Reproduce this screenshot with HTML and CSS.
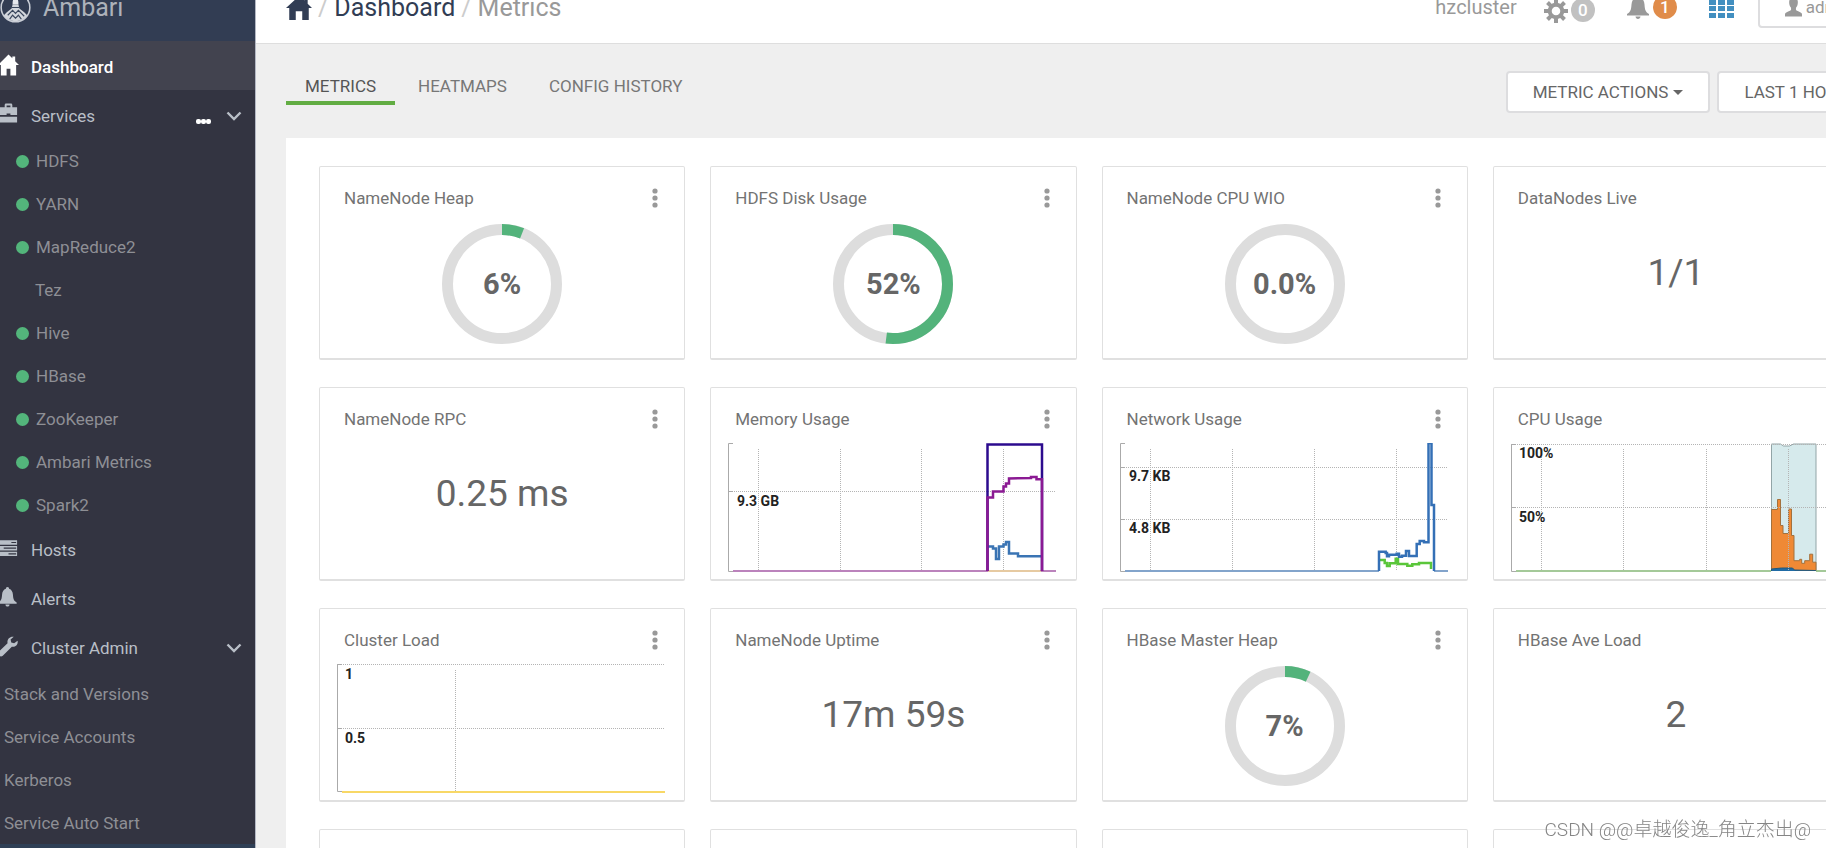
FILE: index.html
```html
<!DOCTYPE html>
<html lang="en">
<head>
<meta charset="utf-8">
<title>Ambari - Dashboard Metrics</title>
<link rel="stylesheet" href="styles.css">
</head>
<body>
<svg class="defs" aria-hidden="true">
  <symbol id="home" viewBox="0 0 24 22"><path d="M12 0 0 11h3v11h6v-8h6v8h6V11h3l-4-4V1h-3v3z"/></symbol>
  <symbol id="bell" viewBox="0 0 22 24"><path d="M11 0c1.300 0 1.900.9 1.900 2 3 1 4.300 3.500 4.600 7 .4 5.500 1 7.500 4.500 9.500v1.500H0v-1.500C3.500 16.500 4.100 14.500 4.500 9c.3-3.500 1.600-6 4.600-7 0-1.100.6-2 1.900-2zM8.500 21h5c-.2 1.600-1.100 2.500-2.500 2.500S8.700 22.600 8.500 21z"/></symbol>
  <symbol id="dots" viewBox="0 0 6 20"><circle cx="3" cy="3" r="2.600"/><circle cx="3" cy="10" r="2.600"/><circle cx="3" cy="17" r="2.600"/></symbol>
  <symbol id="chevron" viewBox="0 0 16 10"><path d="M1.500 1.500 8 8l6.500-6.500" fill="none" stroke="currentColor" stroke-width="2.400"/></symbol>
</svg>
<div class="app">
  <nav class="sidebar" aria-label="Main">
    <a class="brand" href="#">
      <svg class="logo" viewBox="0 0 32 32" aria-hidden="true"><circle cx="16" cy="16" r="14.800" fill="none" stroke="#c9ced6" stroke-width="1.600"/><path d="M15.200 2h1.600v5h-1.600zM13 11c0-3 1.200-4.500 3-4.500S19 8 19 11v2h-6z" fill="#e6e9ee"/><path d="M13 13h6l1 4 5 4 3 3c-3 4.500-7.500 6-12 6S7 28.500 4 24l3-3 5-4z" fill="#d3d7dd"/><path d="M8 24l5-5 3 3 3-3 6 6M10 28l3-4 3 3 3-3 3 4M12 16h8" fill="none" stroke="#3b485e" stroke-width="1.200"/></svg>
      <span>Ambari</span>
    </a>
    <ul class="menu">
      <li><a class="item active" href="#"><svg class="icon" viewBox="0 0 22 22"><path d="M11 0 0 11h3v11h6v-7h4v7h6V11h3l-4-4V2h-3v2z"/></svg><span>Dashboard</span></a></li>
      <li>
        <div class="item"><a class="item-link" href="#"><svg class="icon" viewBox="0 0 22 22"><path d="M7 4V1.500C7 .7 7.500 0 8.500 0h5c1 0 1.500.7 1.500 1.500V4h5v8h-7v-1.500H9V12H0V4zm2 0h4V2H9zM0 14h20v6H0z"/></svg><span>Services</span></a>
        <button class="more" type="button" aria-label="Service actions"><i></i><i></i><i></i></button>
        <button class="toggle" type="button" aria-label="Toggle services"><svg><use href="#chevron"/></svg></button></div>
        <ul class="services">
          <li><a href="#"><i class="dot"></i>HDFS</a></li>
          <li><a href="#"><i class="dot"></i>YARN</a></li>
          <li><a href="#"><i class="dot"></i>MapReduce2</a></li>
          <li><a class="client" href="#">Tez</a></li>
          <li><a href="#"><i class="dot"></i>Hive</a></li>
          <li><a href="#"><i class="dot"></i>HBase</a></li>
          <li><a href="#"><i class="dot"></i>ZooKeeper</a></li>
          <li><a href="#"><i class="dot"></i>Ambari Metrics</a></li>
          <li><a href="#"><i class="dot"></i>Spark2</a></li>
        </ul>
      </li>
      <li><a class="item" href="#"><svg class="icon" viewBox="0 0 22 22"><path d="M0 3h20v4.500H0zM0 9h20v4.500H0zM0 15h20v4.500H0z"/><path d="M14 5.200h5M6 11.200h13M11 17.200h8" stroke="#333441" stroke-width="1.200"/></svg><span>Hosts</span></a></li>
      <li><a class="item" href="#"><svg class="icon bell"><use href="#bell"/></svg><span>Alerts</span></a></li>
      <li>
        <div class="item"><a class="item-link" href="#"><svg class="icon" viewBox="0 0 22 22"><path d="M20.500 5.500c.8 3.500-2 7-6 6.300L5 21.200c-1.400 1.200-4 .8-4.800-1-.5-1.200-.2-2.500.7-3.300L10 8c-.8-4 2.500-7.500 6.500-6.700l-3.300 3 .7 3 3 .7z"/></svg><span>Cluster Admin</span></a>
        <button class="toggle" type="button" aria-label="Toggle cluster admin"><svg><use href="#chevron"/></svg></button></div>
        <ul class="admin">
          <li><a href="#">Stack and Versions</a></li>
          <li><a href="#">Service Accounts</a></li>
          <li><a href="#">Kerberos</a></li>
          <li><a href="#">Service Auto Start</a></li>
        </ul>
      </li>
    </ul>
    <div class="sidebar-foot"></div>
  </nav>

  <div class="page">
    <header class="topbar">
      <nav class="crumbs" aria-label="Breadcrumb">
        <a href="#" aria-label="Home"><svg class="crumb-home"><use href="#home"/></svg></a><span class="slash">/</span><a href="#">Dashboard</a><span class="slash">/</span><span class="current">Metrics</span>
      </nav>
      <div class="tools">
        <a class="cluster" href="#">hzcluster</a>
        <button class="tool" type="button" aria-label="Background operations"><svg class="gear" viewBox="0 0 24 24"><g fill="none" stroke="currentColor"><circle cx="12" cy="12" r="6.300" stroke-width="4"/><path stroke-width="4" d="M12 0v5M12 19v5M0 12h5M19 12h5M3.500 3.500l3.600 3.600M16.900 16.900l3.600 3.600M20.500 3.500l-3.600 3.600M7.100 16.900l-3.600 3.600"/></g></svg><span class="badge low">0</span></button>
        <button class="tool" type="button" aria-label="Alerts"><svg class="tool-bell"><use href="#bell"/></svg><span class="badge">1</span></button>
        <button class="tool" type="button" aria-label="Views"><svg class="views" viewBox="0 0 25 25"><path d="M0 0h7v5H0zM9 0h7v5H9zM18 0h7v5h-7zM0 7h7v5H0zM9 7h7v5H9zM18 7h7v5h-7zM0 13h7v5H0zM9 13h7v5H9zM18 13h7v5h-7zM0 20h7v5H0zM9 20h7v5H9zM18 20h7v5h-7z"/></svg></button>
        <button class="btn user" type="button"><svg class="person" viewBox="0 0 18 20"><path d="M9 0c3 0 4.600 2 4.600 5 0 2.500-.8 4.500-2 5.800v2c.5 1.500 5.400 2 6.200 4.200.3.800.2 2 .2 3H0c0-1-.1-2.200.2-3 .8-2.200 5.700-2.700 6.200-4.200v-2c-1.200-1.300-2-3.300-2-5.800C4.400 2 6 0 9 0z"/></svg>admin</button>
      </div>
    </header>

    <main>
      <div class="bar">
        <div class="tabs" role="tablist">
          <a class="tab selected" role="tab" href="#">METRICS</a>
          <a class="tab" role="tab" href="#">HEATMAPS</a>
          <a class="tab" role="tab" href="#">CONFIG HISTORY</a>
        </div>
        <div class="actions">
          <button class="btn" type="button">METRIC ACTIONS <i class="caret"></i></button>
          <button class="btn" type="button">LAST 1 HOUR <i class="caret"></i></button>
        </div>
      </div>

      <section class="panel">
        <article class="card"><h2>NameNode Heap</h2><button class="menu-btn" type="button" aria-label="Widget menu"><svg><use href="#dots"/></svg></button>
          <div class="donut"><svg viewBox="0 0 120 120"><circle class="track" cx="60" cy="60" r="54.500"/><circle class="fill" cx="60" cy="60" r="54.500" pathLength="100" stroke-dasharray="6 94"/></svg><span>6%</span></div></article>
        <article class="card"><h2>HDFS Disk Usage</h2><button class="menu-btn" type="button" aria-label="Widget menu"><svg><use href="#dots"/></svg></button>
          <div class="donut"><svg viewBox="0 0 120 120"><circle class="track" cx="60" cy="60" r="54.500"/><circle class="fill" cx="60" cy="60" r="54.500" pathLength="100" stroke-dasharray="52 48"/></svg><span>52%</span></div></article>
        <article class="card"><h2>NameNode CPU WIO</h2><button class="menu-btn" type="button" aria-label="Widget menu"><svg><use href="#dots"/></svg></button>
          <div class="donut"><svg viewBox="0 0 120 120"><circle class="track" cx="60" cy="60" r="54.500"/></svg><span>0.0%</span></div></article>
        <article class="card"><h2>DataNodes Live</h2><p class="value">1/1</p></article>

        <article class="card"><h2>NameNode RPC</h2><button class="menu-btn" type="button" aria-label="Widget menu"><svg><use href="#dots"/></svg></button><p class="value">0.25 ms</p></article>
        <article class="card"><h2>Memory Usage</h2><button class="menu-btn" type="button" aria-label="Widget menu"><svg><use href="#dots"/></svg></button>
          <svg class="chart" viewBox="0 0 330 130">
            <path class="grid" d="M30.500 6v122M112.500 6v122M193.500 6v122M275.500 6v122M0 48.500h328"/>
            <path class="axis" d="M5 .5H.5v128H5M0 48.500h5"/>
            <path d="M5 128H328" stroke="#a45aa6" stroke-width="1.500" fill="none"/><path d="M260 128h53" stroke="#f5e29a" stroke-width="1.500" fill="none"/>
            <path d="M259.500 103.500h5.500v2h3V116h3v-12.500h4.500v-2h2.500V99h3v11.500h9v2.800h23" fill="none" stroke="#3a74b4" stroke-width="2.500"/>
            <path d="M259.500 128V1.500h54.500V128" fill="none" stroke="#2c0b8e" stroke-width="2.500"/>
            <path d="M259.500 128V54.500h5.500v-6h10.500v-5h2.500v-3h3v-5l22-.5v-1h5.500v2.300h5.500V128" fill="none" stroke="#8b1a93" stroke-width="2.500"/>
            <text x="9" y="63">9.3 GB</text>
          </svg></article>
        <article class="card"><h2>Network Usage</h2><button class="menu-btn" type="button" aria-label="Widget menu"><svg><use href="#dots"/></svg></button>
          <svg class="chart" viewBox="0 0 330 130">
            <path class="grid" d="M30.500 6v122M112.500 6v122M194.500 6v122M276.500 6v122M0 24.500h328M0 76.500h328"/>
            <path class="axis" d="M5 .5H.5v128H5M0 24.500h5M0 76.500h5"/>
            <path d="M5 128h254M314 128h14" stroke="#5b87ba" stroke-width="1.500" fill="none"/>
            <path d="M259.500 117h5.200v3h2.300v3h2.700v-2.700h6v-4.600h2.300v5.300h9.300v1.700h5v-1.400h6.700V120H311v6" fill="none" stroke="#5ac63a" stroke-width="2.500"/>
            <path d="M259 128v-19.300h6.700v1.300h1.300v3.300h2v-1.600h7.700v-1H279v3h3v-1h4V108h3v5h7.700v-12h3v-3h4.300v1.300h4.500V0h3v62h2.500v66" fill="none" stroke="#3470b6" stroke-width="2.500"/>
            <text x="9" y="38">9.7 KB</text><text x="9" y="90">4.8 KB</text>
          </svg></article>
        <article class="card"><h2>CPU Usage</h2>
          <svg class="chart" viewBox="0 0 330 130">
            <path d="M260.500 128V1h9l3 2h6l4-2h22.500v127" fill="#d6eaec" stroke="#92a5a7"/>
            <path d="M260.500 128V66.500h6v-10h3v26h2.500v8h5.500V66h3v26.500h2.500v25.200h5.700v-1.400h2v4h3v-2.600h5v-6.500h3v8h3.300V128" fill="#ef8935" stroke="#a3713d"/>
            <path d="M260.500 128v-2l10-1h11l2 2 21 .5v.5" fill="#1f6ba5" stroke="#245777"/>
            <path class="grid" d="M30.500 6v122M112.500 6v122M195.500 6v122M277.500 6v122M0 1.500h328M0 64.500h328"/>
            <path class="axis" d="M5 1.500H.5v127H5M0 64.500h5"/>
            <path d="M5 128h255M305 128h23" stroke="#86b878" stroke-width="1.500" fill="none"/>
            <text x="8" y="15">100%</text><text x="8" y="79">50%</text>
          </svg></article>

        <article class="card"><h2>Cluster Load</h2><button class="menu-btn" type="button" aria-label="Widget menu"><svg><use href="#dots"/></svg></button>
          <svg class="chart" viewBox="0 0 330 130">
            <path class="grid" d="M118.500 6v122M0 .5h328M0 64.500h328"/>
            <path class="axis" d="M5 .5H.5v127H5M0 64.500h5"/>
            <path d="M5 128h323" stroke="#f8d866" stroke-width="2" fill="none"/>
            <text x="8" y="15">1</text><text x="8" y="79">0.5</text>
          </svg></article>
        <article class="card"><h2>NameNode Uptime</h2><button class="menu-btn" type="button" aria-label="Widget menu"><svg><use href="#dots"/></svg></button><p class="value">17m 59s</p></article>
        <article class="card"><h2>HBase Master Heap</h2><button class="menu-btn" type="button" aria-label="Widget menu"><svg><use href="#dots"/></svg></button>
          <div class="donut"><svg viewBox="0 0 120 120"><circle class="track" cx="60" cy="60" r="54.500"/><circle class="fill" cx="60" cy="60" r="54.500" pathLength="100" stroke-dasharray="7 93"/></svg><span>7%</span></div></article>
        <article class="card"><h2>HBase Ave Load</h2><p class="value">2</p></article>

        <article class="card"></article><article class="card"></article><article class="card"></article><article class="card"></article>
      </section>
    </main>
  </div>
</div>
<div class="watermark">CSDN @@卓越俊逸_角立杰出@</div>
</body>
</html>
```
FILE: styles.css
```css
* { box-sizing: border-box; }
body {
  margin: 0;
  font: 17px/24px Roboto, "Noto Sans CJK SC", sans-serif;
  color: #666;
  background: #efefef;
  overflow: hidden;
}
a { color: inherit; text-decoration: none; }
ul { list-style: none; margin: 0; padding: 0; }
button { font: inherit; color: inherit; background: none; border: 0; padding: 0; }
svg { display: block; fill: currentColor; flex: none; }
.defs { position: absolute; width: 0; height: 0; }

.app { display: flex; height: 100vh; overflow: hidden; }

/* Sidebar */
.sidebar {
  display: flex;
  flex-direction: column;
  flex: 0 0 256px;
  background: #333441;
  border-right: 1px solid #b4b8c4;
  color: #b9bfc7;
  overflow: hidden;
}
.brand {
  display: flex;
  align-items: center;
  gap: 12px;
  flex: 0 0 67px;
  margin-top: -26px;
  background: #323d53;
  color: #adb2ba;
  font-size: 25px;
}
.logo { width: 31px; height: 31px; }
.menu { flex: 1; }
.item, .item-link { display: flex; align-items: center; }
.item { height: 49px; padding: 3px 13px 0 0; }
.item-link { flex: 1; }
.item.active { background: #42434f; color: #fff; font-weight: 500; }
.icon { width: 21px; height: 22px; margin: 0 12px 4px -2px; }
.icon.bell { width: 19px; height: 20px; margin-right: 14px; }
.more { display: flex; margin: 10px 15px 0 0; }
.more i { width: 5px; height: 5px; border-radius: 2px; background: #fff; }
.toggle svg { width: 16px; height: 10px; }
.services { margin-bottom: -2px; color: #8e8f95; }
.services a, .admin a { display: flex; align-items: center; height: 43px; }
.services a { padding: 1px 0 0 16px; }
.services .client { padding-left: 35px; }
.dot { width: 13px; height: 13px; margin-right: 7px; border-radius: 50%; background: #53b57b; }
.admin { margin-top: 1px; color: #8e8f95; }
.admin a { padding-left: 4px; }
.sidebar-foot { flex: 0 0 5px; background: #2f3f55; }

/* Top bar */
.page { flex: 1; min-width: 0; overflow: hidden; }
.topbar {
  display: flex;
  justify-content: space-between;
  height: 70px;
  margin-top: -26px;
  padding-left: 30px;
  background: #fff;
  border-bottom: 1px solid #dedede;
}
.crumbs { display: flex; align-items: center; padding-bottom: 2px; font-size: 25px; color: #313d54; }
.crumb-home { width: 26px; height: 24px; }
.slash { margin: 0 6px; color: #ccc; }
.current { color: #999; }
.tools { display: flex; align-items: center; margin-right: -54px; padding-bottom: 3px; color: #999; }
.cluster { margin-right: 27px; font-size: 20px; }
.tool { display: flex; align-items: center; margin-right: 32px; }
.gear { width: 24px; height: 24px; margin: 8px 3px 0 0; }
.tool-bell { width: 22px; height: 25px; margin-right: 4px; }
.badge {
  width: 24px;
  height: 24px;
  border-radius: 50%;
  background: #e08c4a;
  color: #fff;
  font-weight: 500;
}
.badge.low { margin-top: 5px; background: #c1c1c1; }
.views { width: 25px; height: 25px; margin-bottom: 3px; color: #428fc0; }
.btn {
  display: flex;
  align-items: center;
  height: 42px;
  padding: 0 25px;
  border: 2px solid #dddddf;
  border-radius: 4px;
  background: #fff;
}
.tool + .btn { margin-left: -8px; }
.user { gap: 4px; }
.person { width: 17px; height: 20px; }
.caret { margin-left: 5px; border: 5px solid transparent; border-top-color: currentColor; border-bottom: 0; }

/* Tabs and actions */
.bar { display: flex; justify-content: space-between; height: 94px; padding: 27px 0 0 30px; }
.tabs { display: flex; align-items: flex-start; gap: 4px; color: #777; }
.tab { padding: 3px 19px; border-bottom: 4px solid transparent; }
.tab.selected { border-color: #62ad43; color: #555; }
.actions { display: flex; gap: 7px; margin-right: -64px; }

/* Widgets */
.panel {
  display: grid;
  grid-template-columns: repeat(4, 1fr);
  grid-auto-rows: 194px;
  gap: 27px 25px;
  margin: 0 -33px 0 30px;
  padding: 28px 0 28px 33px;
  background: #fff;
}
.card {
  display: grid;
  grid-template-columns: 1fr auto;
  grid-template-rows: 44px 1fr;
  border: 1px solid #e0e0e0;
  border-bottom-width: 2px;
  border-radius: 2px;
}
.card h2 { margin: 0; padding: 19px 0 0 24px; font-size: 17px; font-weight: 400; line-height: 24px; color: #737373; }
.menu-btn { padding: 18px 26px 0 0; color: #999; }
.menu-btn svg { width: 6px; height: 20px; }
.donut, .value, .chart { grid-column: 1 / -1; }
.donut { display: grid; place-items: center; padding-top: 13px; align-content: start; }
.donut svg, .donut span { grid-area: 1 / 1; }
.donut svg { width: 120px; height: 120px; transform: rotate(-90deg); }
.donut span { font-size: 29px; font-weight: 700; color: #666; }
.donut circle { fill: none; stroke-width: 11px; }
.donut .track { stroke: #ddd; }
.donut .fill { stroke: #53b37b; }
.value { margin: 0; padding-top: 42px; font-size: 37px; line-height: 40px; text-align: center; color: #666; }
.chart { width: 330px; height: 130px; margin: 11px 0 0 17px; }
.chart .grid { fill: none; stroke: #b4b4b4; stroke-dasharray: 1 1; }
.chart .axis { fill: none; stroke: #aaa; }
.chart text { font-size: 14px; font-weight: 700; fill: #222; }

.watermark {
  position: fixed;
  right: 15px;
  bottom: 4px;
  font-size: 19px;
  font-weight: 300;
  line-height: 28px;
  color: #858585;
}
```
